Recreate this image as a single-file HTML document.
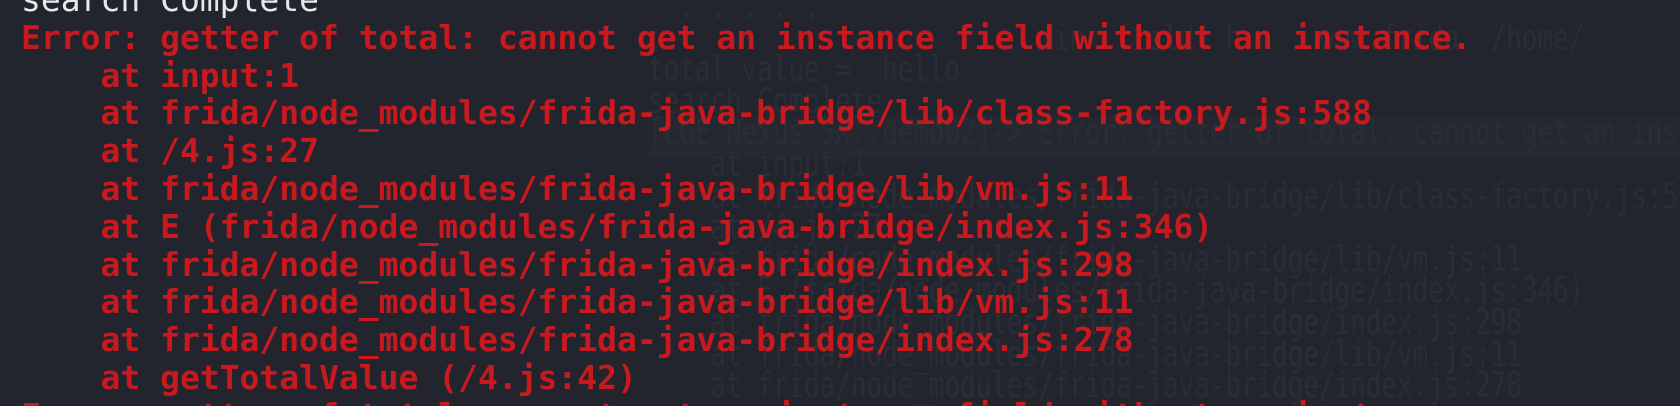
<!DOCTYPE html>
<html><head><meta charset="utf-8"><style>
html,body{margin:0;padding:0;background:#22252e;width:1680px;height:406px;overflow:hidden;position:relative}
.g{position:absolute;left:648px;top:-9px;font-family:"DejaVu Sans Mono",monospace;font-size:36px;line-height:31.6px;color:#2a2d36;white-space:pre;transform:scaleX(0.72);transform-origin:0 0}
.band{position:absolute;left:648px;top:116px;width:1040px;height:42px;background:#252831}
.t{position:absolute;left:21px;top:-19px;font-family:"DejaVu Sans Mono","Liberation Mono",monospace;font-weight:bold;font-size:33px;line-height:37.8px;white-space:pre;color:#c8191e}
.w{color:#e8e8e8;font-weight:normal}
</style></head><body>
<div class="band"></div>
<div class="g">  . . . . .
                          in  field  h     www.frida  /home/
total value =  hello
search Complete
[LGE Nexus 5X::demo02]-> Error: getter of total: cannot get an instance
    at input:1
    at frida/node_modules/frida-java-bridge/lib/class-factory.js:588
    at /4.js:27
    at frida/node_modules/frida-java-bridge/lib/vm.js:11
    at E (frida/node_modules/frida-java-bridge/index.js:346)
    at frida/node_modules/frida-java-bridge/index.js:298
    at frida/node_modules/frida-java-bridge/lib/vm.js:11
    at frida/node_modules/frida-java-bridge/index.js:278</div>
<div class="t"><span class="w">search Complete</span>
Error: getter of total: cannot get an instance field without an instance.
    at input:1
    at frida/node_modules/frida-java-bridge/lib/class-factory.js:588
    at /4.js:27
    at frida/node_modules/frida-java-bridge/lib/vm.js:11
    at E (frida/node_modules/frida-java-bridge/index.js:346)
    at frida/node_modules/frida-java-bridge/index.js:298
    at frida/node_modules/frida-java-bridge/lib/vm.js:11
    at frida/node_modules/frida-java-bridge/index.js:278
    at getTotalValue (/4.js:42)
Error: getter of total: cannot get an instance field without an instance.</div>
</body></html>
